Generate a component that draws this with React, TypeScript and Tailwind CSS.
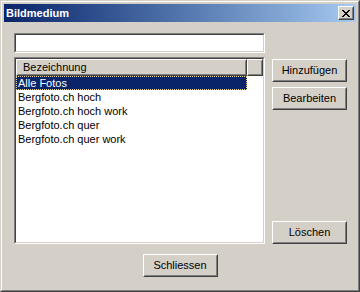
const font = "font-['Tahoma','Liberation_Sans',sans-serif] text-[11px] leading-[13px]"

function Raised({ className = '', children }: { className?: string; children?: React.ReactNode }) {
  return (
    <div className={`border border-t-white border-l-white border-b-[#404040] border-r-[#404040] ${className}`}>
      <div className="flex h-full w-full items-center justify-center border border-t-[#d4d0c8] border-l-[#d4d0c8] border-b-[#808080] border-r-[#808080] bg-[#d4d0c8]">
        {children}
      </div>
    </div>
  )
}

function Sunken({ className = '', children }: { className?: string; children?: React.ReactNode }) {
  return (
    <div className={`border border-t-[#808080] border-l-[#808080] border-b-white border-r-white ${className}`}>
      <div className="flex h-full w-full flex-col border border-t-[#404040] border-l-[#404040] border-b-[#d4d0c8] border-r-[#d4d0c8] bg-white">
        {children}
      </div>
    </div>
  )
}

function Button({ label, className = '' }: { label: string; className?: string }) {
  return (
    <Raised className={`h-[23px] w-[75px] ${className}`}>
      <span className="text-black">{label}</span>
    </Raised>
  )
}

const items = ['Alle Fotos', 'Bergfoto.ch hoch', 'Bergfoto.ch hoch work', 'Bergfoto.ch quer', 'Bergfoto.ch quer work']

export default function App() {
  return (
    <div className={`h-[292px] w-[360px] ${font}`}>
      {/* window frame */}
      <div className="h-full w-full border border-t-[#d4d0c8] border-l-[#d4d0c8] border-b-[#404040] border-r-[#404040]">
        <div className="flex h-full w-full flex-col border border-t-white border-l-white border-b-[#808080] border-r-[#808080] bg-[#d4d0c8] p-[2px]">
          {/* title bar */}
          <div className="flex h-[18px] items-center justify-between bg-linear-to-r from-[#0a246a] to-[#a6caf0] pl-[2px] pr-[2px]">
            <span className="font-bold text-white">Bildmedium</span>
            <Raised className="h-[14px] w-[16px]">
              <svg width="8" height="7" viewBox="0 0 8 7" shapeRendering="crispEdges">
                <path d="M0 0h2v1H0zM6 0h2v1H6zM1 1h2v1H1zM5 1h2v1H5zM2 2h4v1H2zM3 3h2v1H3zM2 4h4v1H2zM1 5h2v1H1zM5 5h2v1H5zM0 6h2v1H0zM6 6h2v1H6z" fill="#000" />
              </svg>
            </Raised>
          </div>

          {/* client */}
          <div className="flex flex-1 flex-col pl-[10px] pt-[11px]">
            <div className="flex">
              <div className="flex w-[251px] flex-col gap-[4px]">
                <Sunken className="h-[20px]" />
                <Sunken className="h-[187px]">
                  <div className="flex h-[17px]">
                    <Raised className="h-[17px] w-[231px]">
                      <span className="w-full pl-[5px] text-left text-black">Bezeichnung</span>
                    </Raised>
                    <Raised className="h-[17px] flex-1" />
                  </div>
                  <div className="flex flex-col">
                    {items.map((it, i) => (
                      <div
                        key={it}
                        className={`flex h-[14px] w-[231px] items-center pl-[2px] ${
                          i === 0 ? 'bg-[#0a246a] text-white outline-1 -outline-offset-1 outline-dotted outline-[#e8d890]' : 'text-black'
                        }`}
                      >
                        {it}
                      </div>
                    ))}
                  </div>
                </Sunken>
              </div>
              <div className="ml-[7px] flex flex-col gap-[5px] pt-[26px]">
                <Button label="Hinzufügen" />
                <Button label="Bearbeiten" />
                <Button label="Löschen" className="mt-auto" />
              </div>
            </div>
            <div className="flex justify-center pr-[10px] pt-[10px]">
              <Button label="Schliessen" />
            </div>
          </div>
        </div>
      </div>
    </div>
  )
}
